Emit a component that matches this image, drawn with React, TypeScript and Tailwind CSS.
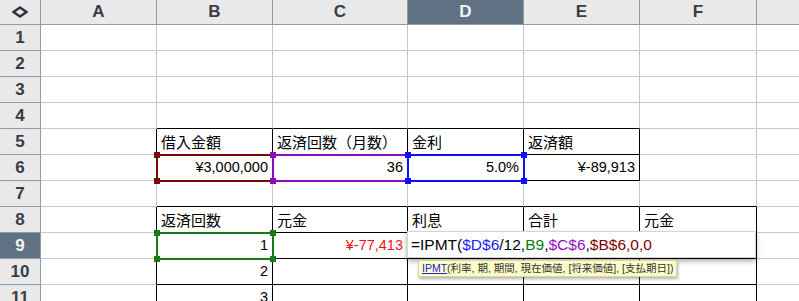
import React from "react";

const widths = [41, 116, 116, 135, 116, 116, 117, 60];
const letters = ["", "A", "B", "C", "D", "E", "F", ""];
const ROW_H = 26;
const HEAD_H = 25;

type Cell = { t: string; align?: "l" | "r"; cls?: string };
const data: Record<number, Record<number, Cell>> = {
  5: {
    2: { t: "借入金額" },
    3: { t: "返済回数（月数）" },
    4: { t: "金利" },
    5: { t: "返済額" },
  },
  6: {
    2: { t: "¥3,000,000", align: "r" },
    3: { t: "36", align: "r" },
    4: { t: "5.0%", align: "r" },
    5: { t: "¥-89,913", align: "r" },
  },
  8: {
    2: { t: "返済回数" },
    3: { t: "元金" },
    4: { t: "利息" },
    5: { t: "合計" },
    6: { t: "元金" },
  },
  9: {
    2: { t: "1", align: "r" },
    3: { t: "¥-77,413", align: "r", cls: "text-[#ee1111]" },
  },
  10: { 2: { t: "2", align: "r" } },
  11: { 2: { t: "3", align: "r" } },
};

const tables = [
  { r0: 5, r1: 6, c0: 2, c1: 5 },
  { r0: 8, r1: 20, c0: 2, c1: 6 },
];

function rightBlack(r: number, c: number) {
  return tables.some((t) => r >= t.r0 && r <= t.r1 && c >= t.c0 - 1 && c <= t.c1);
}
function bottomBlack(r: number, c: number) {
  return tables.some((t) => c >= t.c0 && c <= t.c1 && r >= t.r0 - 1 && r <= t.r1);
}

const colX = (c: number) => widths.slice(0, c).reduce((a, b) => a + b, 0);
const rowY = (r: number) => HEAD_H + (r - 1) * ROW_H;

function Sel({ c0, c1, r, color }: { c0: number; c1: number; r: number; color: string }) {
  const x0 = colX(c0) - 1;
  const x1 = colX(c1 + 1) - 1;
  const y0 = rowY(r) - 1;
  const y1 = rowY(r + 1) - 1;
  const sq = (x: number, y: number, k: string) => (
    <div
      key={k}
      className="absolute w-[6px] h-[6px]"
      style={{ left: x - 3, top: y - 3, background: color }}
    />
  );
  return (
    <>
      <div
        className="absolute border-2"
        style={{ left: x0 - 0.5, top: y0 - 0.5, width: x1 - x0 + 2, height: y1 - y0 + 2, borderColor: color }}
      />
      {sq(x0 + 0.5, y0 + 0.5, "a")}
      {sq(x1 + 0.5, y0 + 0.5, "b")}
      {sq(x0 + 0.5, y1 + 0.5, "c")}
      {sq(x1 + 0.5, y1 + 0.5, "d")}
    </>
  );
}

export default function App() {
  const rows = Array.from({ length: 11 }, (_, i) => i + 1);
  return (
    <div className="relative w-[799px] h-[301px] overflow-hidden bg-white">
      {/* header row */}
      <div className="flex h-[25px]">
        {widths.map((w, c) => (
          <div
            key={c}
            style={{ width: w }}
            className={`shrink-0 h-[25px] border-b border-r border-[#8c9cad] flex items-center justify-center font-['Liberation_Sans',sans-serif] font-bold text-[17px] ${
              c === 4 ? "bg-[#5f7183] text-[#f4f4f4]" : "bg-[#e9e9e9] text-[#3b3b45]"
            }`}
          >
            {c === 0 ? (
              <svg width="16" height="12" viewBox="0 0 16 12">
                <path d="M8 1.5 L14.5 6 L8 10.5 L1.5 6 Z" fill="none" stroke="#2f3440" strokeWidth="2.4" strokeLinejoin="miter" />
              </svg>
            ) : (
              letters[c]
            )}
          </div>
        ))}
      </div>
      {rows.map((r) => (
        <div key={r} className="flex h-[26px]">
          {widths.map((w, c) => {
            if (c === 0) {
              return (
                <div
                  key={c}
                  style={{ width: w }}
                  className={`shrink-0 h-[26px] border-b border-r border-[#8c9cad] flex items-center justify-center font-['Liberation_Sans',sans-serif] font-bold text-[17px] ${
                    r === 9 ? "bg-[#5f7183] text-[#f4f4f4]" : "bg-[#e9e9e9] text-[#3b3b45]"
                  }`}
                >
                  {r}
                </div>
              );
            }
            const cell = data[r]?.[c];
            const rb = rightBlack(r, c) ? "border-r-black" : "border-r-[#c8c8c8]";
            const bb = bottomBlack(r, c) ? "border-b-black" : "border-b-[#c8c8c8]";
            return (
              <div
                key={c}
                style={{ width: w }}
                className={`shrink-0 h-[26px] border-b border-r ${rb} ${bb} flex items-center px-[4px] whitespace-nowrap ${
                  cell?.align === "r" ? "justify-end" : "justify-start"
                }`}
              >
                {cell && (
                  <span
                    className={`${
                      cell.align === "r"
                        ? "font-['Liberation_Sans','Noto_Sans_CJK_JP',sans-serif] text-[14.5px]"
                        : "font-['Noto_Sans_CJK_JP',sans-serif] text-[15px]"
                    } ${cell.cls ?? "text-black"} leading-none`}
                  >
                    {cell.t}
                  </span>
                )}
              </div>
            );
          })}
        </div>
      ))}

      <Sel c0={2} c1={2} r={6} color="#7a0a0a" />
      <Sel c0={3} c1={3} r={6} color="#8e0cb8" />
      <Sel c0={4} c1={4} r={6} color="#1010f0" />
      <Sel c0={2} c1={2} r={9} color="#187a18" />

      {/* formula editor */}
      <div className="absolute left-[407px] top-[231px] w-[349px] h-[27px] bg-white border border-[#d4d4d4] shadow-[0_3px_5px_rgba(0,0,0,0.35)] flex items-center pl-[3px] font-['Liberation_Sans',sans-serif] text-[15.5px] text-black whitespace-nowrap">
        <span>=IPMT(</span>
        <span className="text-[#1c1cf0]">$D$6</span>
        <span>/12,</span>
        <span className="text-[#0a7a0a]">B9</span>
        <span>,</span>
        <span className="text-[#9010c0]">$C$6</span>
        <span>,</span>
        <span className="text-[#800000]">$B$6,0,0</span>
      </div>

      {/* tooltip */}
      <div className="absolute left-[418px] top-[260px] h-[17px] bg-[#fdfdc8] border border-[#d6d6a8] shadow-[1px_2px_3px_rgba(0,0,0,0.3)] flex items-center px-[3px] font-['Liberation_Sans','Noto_Sans_CJK_JP',sans-serif] text-[10.5px] text-[#333] whitespace-nowrap">
        <span className="text-[#2222dd] underline">IPMT</span>
        <span>(利率, 期, 期間, 現在価値, [将来価値], [支払期日])</span>
      </div>
    </div>
  );
}
